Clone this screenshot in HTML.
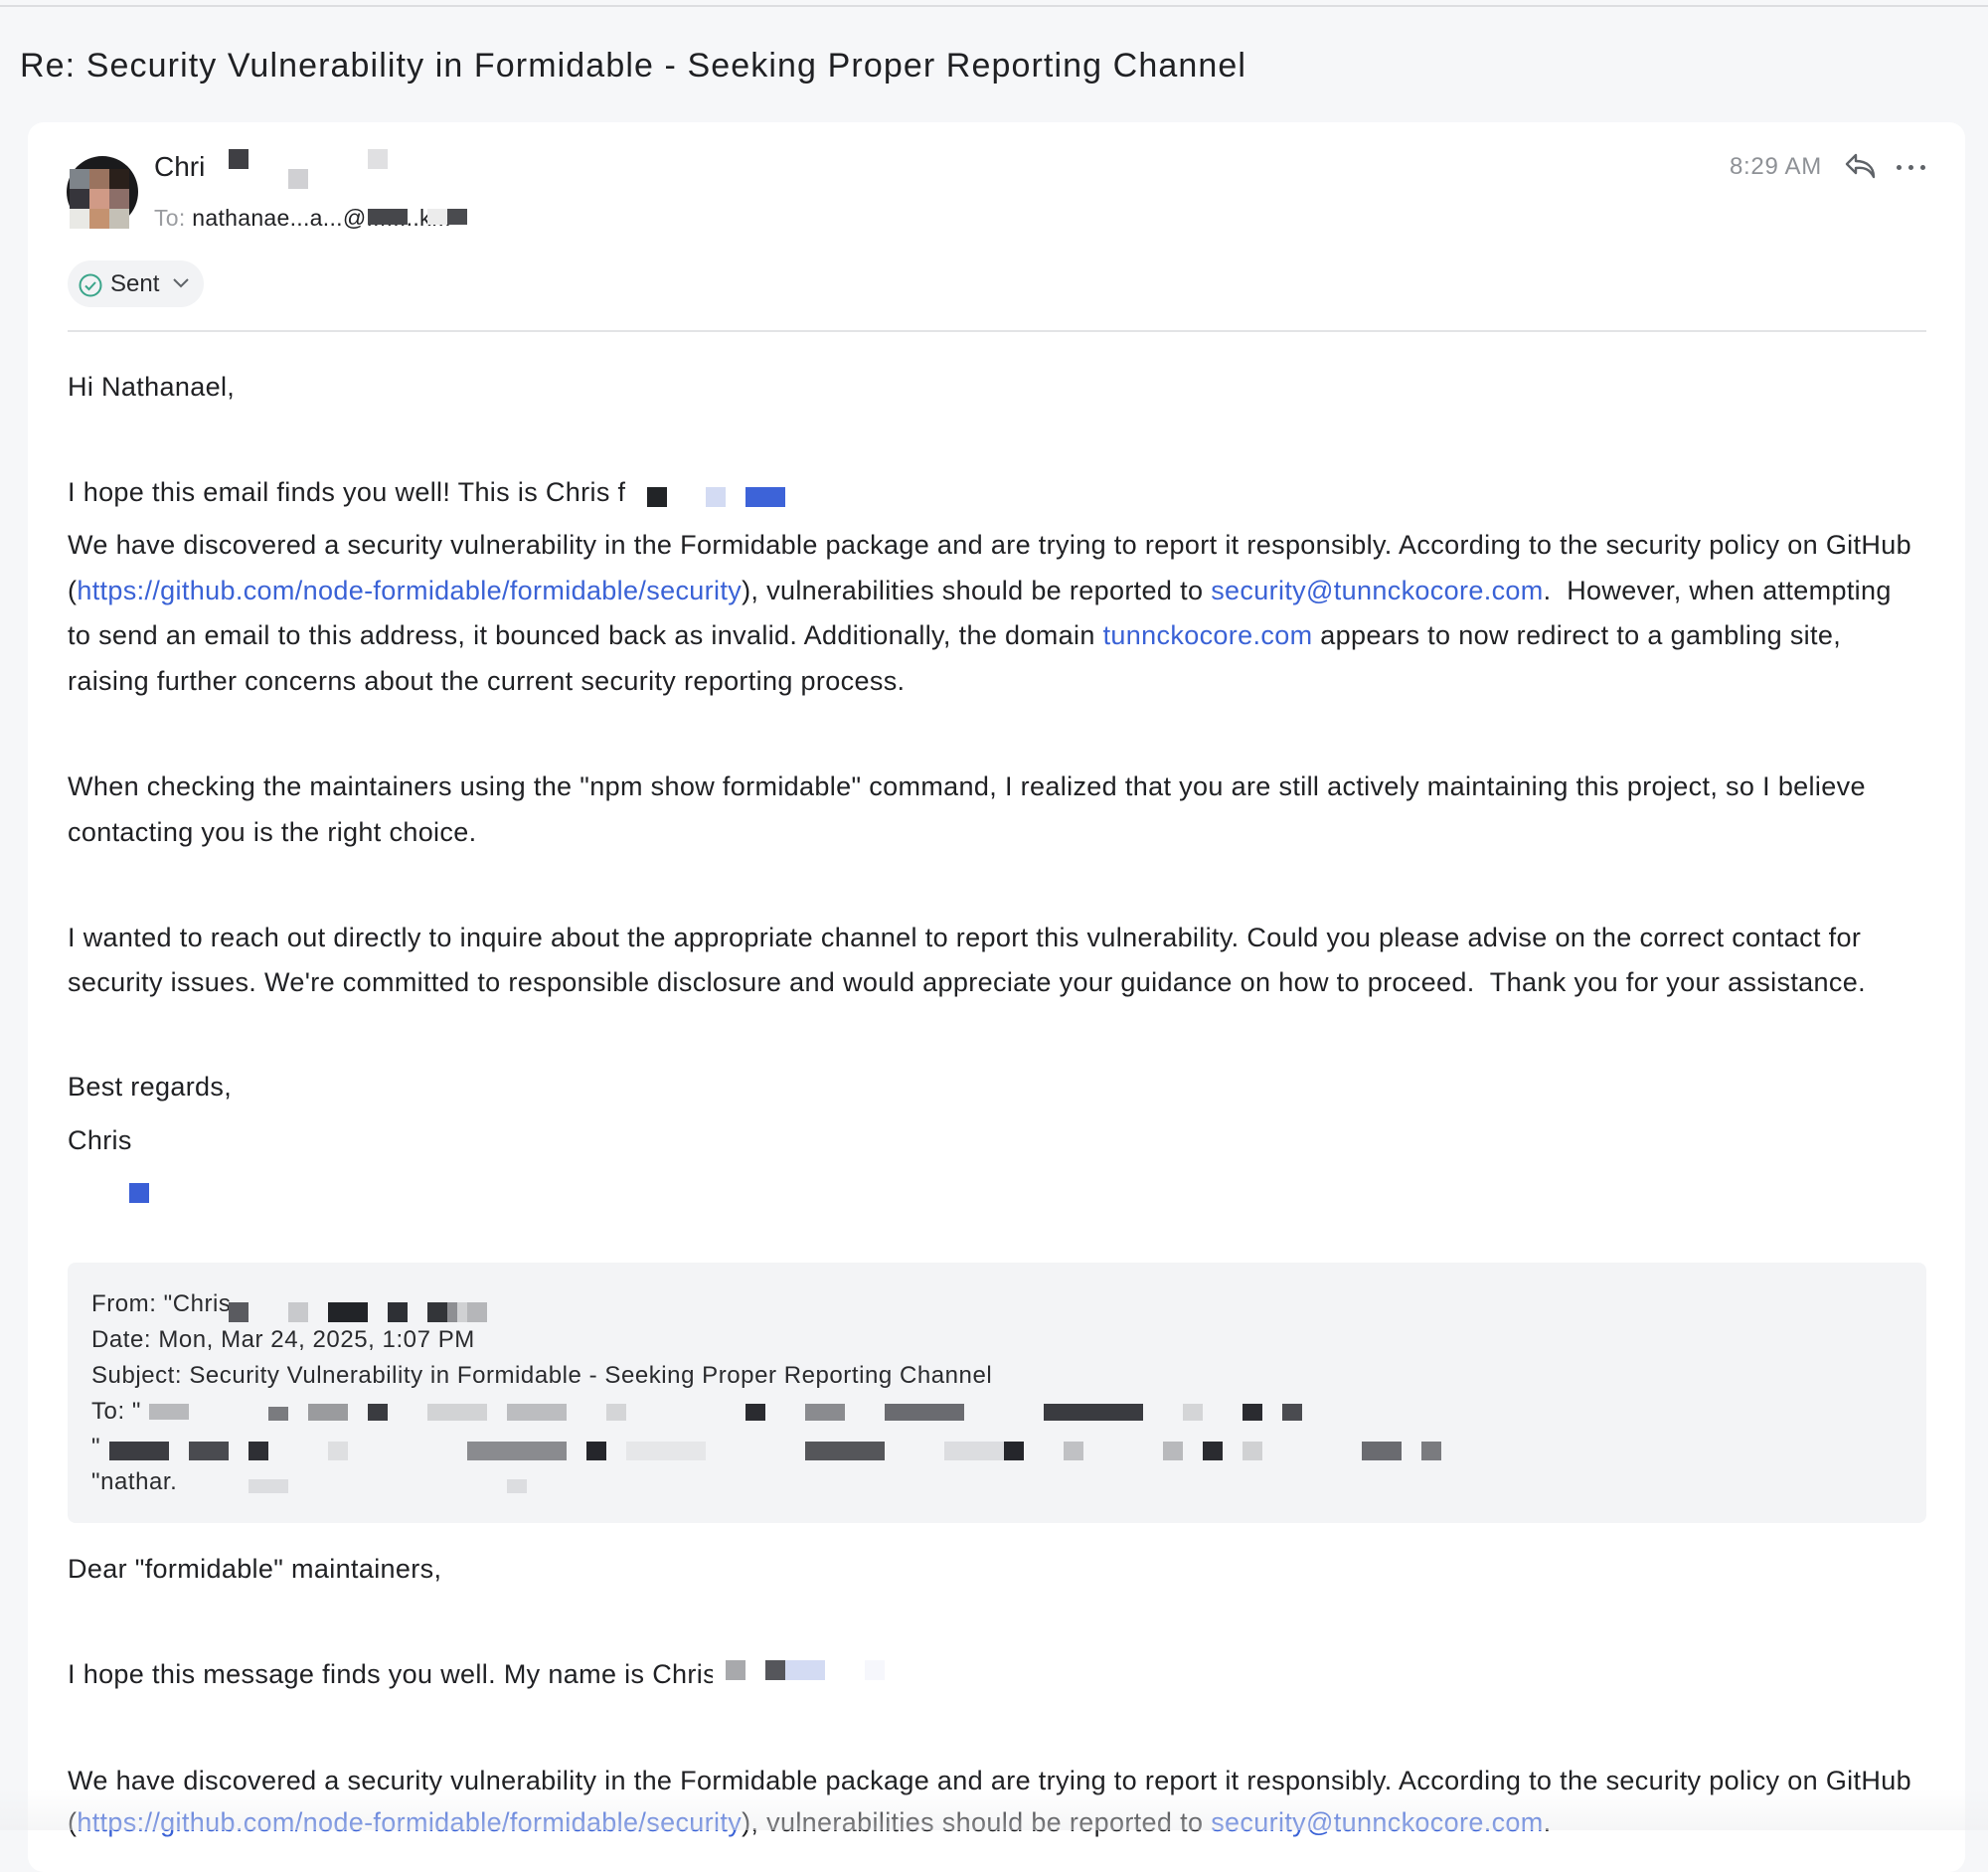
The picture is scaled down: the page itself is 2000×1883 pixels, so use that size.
<!DOCTYPE html>
<html><head><meta charset="utf-8"><style>
*{margin:0;padding:0;box-sizing:border-box}
body{width:2000px;height:1841px;background:#f6f7f9;font-family:"Liberation Sans",Arial,sans-serif;color:#202124;position:relative;overflow:hidden}
.a{position:absolute;white-space:nowrap}
.t{font-size:27px;line-height:46px;left:68px;letter-spacing:0.35px}
.q{font-size:24px;line-height:36px;left:92px;color:#2a2b2e;letter-spacing:0.55px}
a{color:#3a62d6;text-decoration:none}
.r{position:absolute}
</style></head><body>
<div class="r" style="left:0;top:5px;width:2000px;height:2px;background:#dcdde0"></div>
<div class="a" style="left:20px;top:45px;font-size:34px;line-height:42px;color:#1f2023;letter-spacing:1.1px">Re: Security Vulnerability in Formidable - Seeking Proper Reporting Channel</div>
<div class="r" style="left:28px;top:123px;width:1949px;height:1760px;background:#fff;border-radius:16px"></div>

<div class="r" style="left:67px;top:157px;width:72px;height:72px;border-radius:50%;background:#1a1a1c"></div>
<div class="r" style="left:70px;top:170px;width:20px;height:20px;background:#7e848a"></div>
<div class="r" style="left:90px;top:170px;width:20px;height:20px;background:#9a735f"></div>
<div class="r" style="left:110px;top:170px;width:20px;height:20px;background:#2a201b"></div>
<div class="r" style="left:70px;top:190px;width:20px;height:20px;background:#36353b"></div>
<div class="r" style="left:90px;top:190px;width:20px;height:20px;background:#d09a86"></div>
<div class="r" style="left:110px;top:190px;width:20px;height:20px;background:#8c6e68"></div>
<div class="r" style="left:70px;top:210px;width:20px;height:20px;background:#e9e9e5"></div>
<div class="r" style="left:90px;top:210px;width:20px;height:20px;background:#c49270"></div>
<div class="r" style="left:110px;top:210px;width:20px;height:20px;background:#c4c0b6"></div>

<div class="a" style="left:155px;top:151px;font-size:28px;line-height:34px;color:#202124">Chri</div>
<div class="r" style="left:230px;top:150px;width:20px;height:20px;background:#3f3f44"></div>
<div class="r" style="left:290px;top:170px;width:20px;height:20px;background:#d0d0d3"></div>
<div class="r" style="left:370px;top:150px;width:20px;height:20px;background:#e0e0e2"></div>
<div class="a" style="left:155px;top:205px;font-size:23px;line-height:28px;color:#202124;letter-spacing:0.3px"><span style="color:#9a9ca0">To:</span> nathanae...a...@........k...</div>
<div class="r" style="left:370px;top:210px;width:40px;height:16px;background:#46474b"></div>
<div class="r" style="left:430px;top:210px;width:20px;height:16px;background:#ececec"></div>
<div class="r" style="left:450px;top:210px;width:20px;height:16px;background:#4a4b4f"></div>

<div class="a" style="left:1740px;top:153px;font-size:24px;line-height:30px;color:#8e9196;letter-spacing:0.7px">8:29 AM</div>
<svg class="r" style="left:1855px;top:153px" width="34" height="28" viewBox="0 0 34 28"><path d="M12 3 L3 12 L12 21 L12 16 C20 15 26 17 30 25 C30 15 23 9 12 9 Z" fill="none" stroke="#5f6368" stroke-width="2.4" stroke-linejoin="round"/></svg>
<div class="r" style="left:1908px;top:166px;width:5px;height:5px;border-radius:50%;background:#5f6368"></div>
<div class="r" style="left:1920px;top:166px;width:5px;height:5px;border-radius:50%;background:#5f6368"></div>
<div class="r" style="left:1932px;top:166px;width:5px;height:5px;border-radius:50%;background:#5f6368"></div>

<div class="r" style="left:68px;top:262px;width:137px;height:47px;border-radius:24px;background:#f2f3f5"></div>
<svg class="r" style="left:78px;top:274px" width="26" height="26" viewBox="0 0 26 26"><circle cx="13" cy="13" r="10.5" fill="none" stroke="#3aa58a" stroke-width="2"/><path d="M8 13.5 L11.5 17 L18 10" fill="none" stroke="#3aa58a" stroke-width="2"/></svg>
<div class="a" style="left:111px;top:271px;font-size:24px;line-height:30px;color:#2a2b2e">Sent</div>
<svg class="r" style="left:173px;top:279px" width="18" height="12" viewBox="0 0 18 12"><path d="M2 2 L9 9 L16 2" fill="none" stroke="#5f6368" stroke-width="2"/></svg>
<div class="r" style="left:68px;top:332px;width:1870px;height:2px;background:#e3e4e6"></div>

<div class="a t" style="top:366px">Hi Nathanael,</div>
<div class="a t" style="top:472px">I hope this email finds you well! This is Chris f</div>
<div class="r" style="left:651px;top:490px;width:20px;height:20px;background:#222427"></div>
<div class="r" style="left:710px;top:490px;width:20px;height:20px;background:#d3dbf3"></div>
<div class="r" style="left:750px;top:490px;width:40px;height:20px;background:#3d63d8"></div>
<div class="a t" style="top:525px">We have discovered a security vulnerability in the Formidable package and are trying to report it responsibly. According to the security policy on GitHub</div>
<div class="a t" style="top:571px">(<a>https://github.com/node-formidable/formidable/security</a>), vulnerabilities should be reported to <a>security@tunnckocore.com</a>.&nbsp; However, when attempting</div>
<div class="a t" style="top:616px">to send an email to this address, it bounced back as invalid. Additionally, the domain <a>tunnckocore.com</a> appears to now redirect to a gambling site,</div>
<div class="a t" style="top:662px">raising further concerns about the current security reporting process.</div>
<div class="a t" style="top:768px">When checking the maintainers using the "npm show formidable" command, I realized that you are still actively maintaining this project, so I believe</div>
<div class="a t" style="top:814px">contacting you is the right choice.</div>
<div class="a t" style="top:920px">I wanted to reach out directly to inquire about the appropriate channel to report this vulnerability. Could you please advise on the correct contact for</div>
<div class="a t" style="top:965px">security issues. We're committed to responsible disclosure and would appreciate your guidance on how to proceed.&nbsp; Thank you for your assistance.</div>
<div class="a t" style="top:1070px">Best regards,</div>
<div class="a t" style="top:1124px">Chris</div>
<div class="r" style="left:130px;top:1190px;width:20px;height:20px;background:#3a5fd6"></div>

<div class="r" style="left:68px;top:1270px;width:1870px;height:262px;border-radius:8px;background:#f3f4f6"></div>
<div class="a q" style="top:1294px">From: "Chris</div>
<div class="r" style="left:230px;top:1310px;width:20px;height:20px;background:#5a5b60"></div>
<div class="r" style="left:290px;top:1310px;width:20px;height:20px;background:#c8c9cc"></div>
<div class="r" style="left:330px;top:1310px;width:40px;height:20px;background:#222428"></div>
<div class="r" style="left:390px;top:1310px;width:20px;height:20px;background:#2e3035"></div>
<div class="r" style="left:430px;top:1310px;width:60px;height:20px;background:linear-gradient(90deg,#333539 33%,#8e8f93 33%,#8e8f93 50%,#d0d1d3 50%,#d0d1d3 67%,#b5b6b9 67%)"></div>
<div class="a q" style="top:1330px">Date: Mon, Mar 24, 2025, 1:07 PM</div>
<div class="a q" style="top:1366px">Subject: Security Vulnerability in Formidable - Seeking Proper Reporting Channel</div>
<div class="a q" style="top:1402px">To: "</div>
<div class="r" style="left:150px;top:1412px;width:40px;height:16px;background:#b8b9bc"></div>
<div class="r" style="left:270px;top:1415px;width:20px;height:14px;background:#7a7b7f"></div>
<div class="r" style="left:310px;top:1412px;width:40px;height:17px;background:#9a9b9e"></div>
<div class="r" style="left:370px;top:1412px;width:20px;height:17px;background:#3a3b40"></div>
<div class="r" style="left:430px;top:1412px;width:60px;height:17px;background:#d2d3d5"></div>
<div class="r" style="left:510px;top:1412px;width:60px;height:17px;background:#bcbdc0"></div>
<div class="r" style="left:610px;top:1412px;width:20px;height:17px;background:#d4d5d7"></div>
<div class="r" style="left:750px;top:1412px;width:20px;height:17px;background:#2a2b30"></div>
<div class="r" style="left:810px;top:1412px;width:40px;height:17px;background:#8a8b8f"></div>
<div class="r" style="left:890px;top:1412px;width:80px;height:17px;background:#6a6b70"></div>
<div class="r" style="left:1050px;top:1412px;width:100px;height:17px;background:#3a3b40"></div>
<div class="r" style="left:1190px;top:1412px;width:20px;height:17px;background:#d4d5d7"></div>
<div class="r" style="left:1250px;top:1412px;width:20px;height:17px;background:#2a2b30"></div>
<div class="r" style="left:1290px;top:1412px;width:20px;height:17px;background:#4a4b50"></div>
<div class="a q" style="top:1438px">"</div>
<div class="r" style="left:110px;top:1450px;width:60px;height:19px;background:#3c3d42"></div>
<div class="r" style="left:190px;top:1450px;width:40px;height:19px;background:#4a4b50"></div>
<div class="r" style="left:250px;top:1450px;width:20px;height:19px;background:#2e2f34"></div>
<div class="r" style="left:330px;top:1450px;width:20px;height:19px;background:#dedfe1"></div>
<div class="r" style="left:470px;top:1450px;width:100px;height:19px;background:#8a8b8f"></div>
<div class="r" style="left:590px;top:1450px;width:20px;height:19px;background:#25262b"></div>
<div class="r" style="left:630px;top:1450px;width:80px;height:19px;background:#e6e7e9"></div>
<div class="r" style="left:810px;top:1450px;width:80px;height:19px;background:#55565a"></div>
<div class="r" style="left:950px;top:1450px;width:60px;height:19px;background:#dcdde0"></div>
<div class="r" style="left:1010px;top:1450px;width:20px;height:19px;background:#25262b"></div>
<div class="r" style="left:1070px;top:1450px;width:20px;height:19px;background:#c0c1c4"></div>
<div class="r" style="left:1170px;top:1450px;width:20px;height:19px;background:#b8b9bc"></div>
<div class="r" style="left:1210px;top:1450px;width:20px;height:19px;background:#2a2b30"></div>
<div class="r" style="left:1250px;top:1450px;width:20px;height:19px;background:#d0d1d3"></div>
<div class="r" style="left:1370px;top:1450px;width:40px;height:19px;background:#6a6b70"></div>
<div class="r" style="left:1430px;top:1450px;width:20px;height:19px;background:#7a7b7f"></div>
<div class="a q" style="top:1473px">"nathar.</div>
<div class="r" style="left:250px;top:1488px;width:40px;height:14px;background:#dcdde0"></div>
<div class="r" style="left:510px;top:1488px;width:20px;height:14px;background:#dcdde0"></div>

<div class="a t" style="top:1555px">Dear "formidable" maintainers,</div>
<div class="a t" style="top:1661px">I hope this message finds you well. My name is Chri<span style="display:inline-block;width:10px;overflow:hidden;vertical-align:top">s</span></div>
<div class="r" style="left:730px;top:1670px;width:20px;height:20px;background:#a8a9ac"></div>
<div class="r" style="left:770px;top:1670px;width:20px;height:20px;background:#55565b"></div>
<div class="r" style="left:790px;top:1670px;width:40px;height:20px;background:#d3dbf3"></div>
<div class="r" style="left:870px;top:1670px;width:20px;height:20px;background:#f6f7fc"></div>
<div class="a t" style="top:1768px">We have discovered a security vulnerability in the Formidable package and are trying to report it responsibly. According to the security policy on GitHub</div>
<div class="a t" style="top:1810px">(<a>https://github.com/node-formidable/formidable/security</a>), vulnerabilities should be reported to <a>security@tunnckocore.com</a>.</div>
<div class="r" style="left:0;top:1800px;width:2000px;height:41px;background:linear-gradient(rgba(240,241,243,0),rgba(236,237,239,0.5))"></div>
</body></html>
